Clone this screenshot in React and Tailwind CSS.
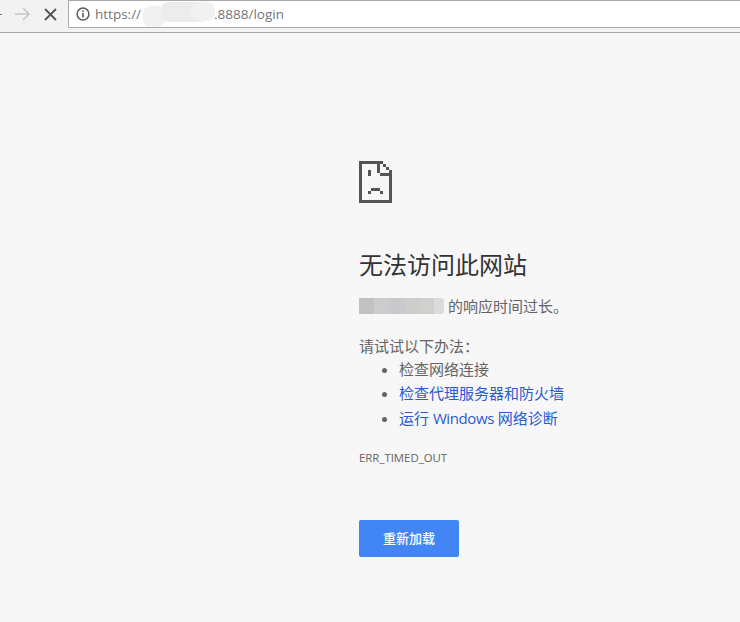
const font = { fontFamily: '"Open Sans", "Noto Sans CJK SC", sans-serif' };

function SadPage() {
  return (
    <svg width="33" height="42" viewBox="0 0 33 42" shapeRendering="crispEdges" className="block">
      <path
        fill="#555555"
        d="M0 0H24V3H3V39H30V15H21V12H18V0H21V12H33V42H0ZM24 3H27V6H24ZM27 6H30V9H27ZM30 9H33V12H30ZM9 9H12V15H9ZM12 27H21V30H12ZM9 30H12V33H9ZM21 30H24V33H21Z"
      />
    </svg>
  );
}

function Blur({ className }) {
  return <span className={className} />;
}

export default function App() {
  return (
    <div className="flex h-[622px] w-[740px] flex-col overflow-hidden bg-[#f7f7f7]" style={font}>
      <header className="flex h-[33px] shrink-0 items-start border-b border-[#a9a9a9] bg-[#f2f2f2]">
        <div className="flex h-[28px] w-[68px] items-center">
          <span className="h-[1px] w-[2px] bg-[#777777]" />
          <svg width="15" height="14" viewBox="0 0 15 14" className="ml-[13px]" fill="none" stroke="#c8c8c8" strokeWidth="1.6">
            <path d="M0 7H14M8 1l6 6-6 6" />
          </svg>
          <svg width="13" height="13" viewBox="0 0 13 13" className="ml-[14px]" fill="none" stroke="#555555" strokeWidth="1.8">
            <path d="M1 1l11 11M12 1L1 12" />
          </svg>
        </div>
        <div className="flex h-[28px] flex-1 items-center rounded-bl-[2px] border-b border-l border-t border-[#a9a9a9] bg-white pl-[7px] text-[13.5px] text-[#767676]">
          <svg width="14" height="14" viewBox="0 0 14 14" fill="none" className="shrink-0">
            <circle cx="7" cy="7" r="5.9" stroke="#5a5a5a" strokeWidth="1.5" />
            <rect x="6.2" y="6" width="1.6" height="4.4" fill="#5a5a5a" />
            <rect x="6.2" y="3.4" width="1.6" height="1.6" fill="#5a5a5a" />
          </svg>
          <span className="ml-[5px]">https://</span>
          <span className="relative h-[25px] w-[73px] shrink-0">
            <Blur className="absolute left-[2px] top-[4px] h-[21px] w-[22px] rounded-[8px] bg-[#f0f0f0]" />
            <Blur className="absolute left-[20px] top-0 h-[20px] w-[48px] rounded-[8px] bg-[#ececec]" />
            <Blur className="absolute left-[50px] top-0 h-[19px] w-[24px] rounded-[8px] bg-[#f1f1f1]" />
          </span>
          <span>.8888/login</span>
        </div>
      </header>

      <main className="flex flex-col pl-[359px] pt-[128px]">
        <SadPage />
        <h1 className="mt-[44px] text-[24px] leading-[36px] font-normal text-[#333333]">无法访问此网站</h1>
        <p className="mt-[11px] flex h-[24px] items-center text-[15px] text-[#646464]">
          <span className="flex h-[16px] w-[85px]">
            <Blur className="h-full w-[15px] bg-[#c2c2c4]" />
            <Blur className="h-full w-[14px] bg-[#ccccca]" />
            <Blur className="h-full w-[17px] bg-[#c8c9cc]" />
            <Blur className="h-full w-[14px] bg-[#cdcdcb]" />
            <Blur className="h-full w-[15px] bg-[#d0d0ce]" />
            <Blur className="h-full w-[10px] rounded-r-[3px] bg-[#dcdcdc]" />
          </span>
          <span className="ml-[4px]">的响应时间过长。</span>
        </p>
        <p className="mt-[16px] h-[23px] text-[15px] leading-[24px] text-[#646464]">请试试以下办法：</p>
        <ul className="list-disc pl-[40px] text-[15px] leading-[24px] text-[#646464]">
          <li>检查网络连接</li>
          <li><a className="text-[#2a5bd0]">检查代理服务器和防火墙</a></li>
          <li className="mt-[1px]"><a className="text-[#2a5bd0]">运行 <span className="tracking-[-0.4px]">Windows</span> 网络诊断</a></li>
        </ul>
        <p className="mt-[20px] text-[11.4px] leading-[16px] text-[#646464]">ERR_TIMED_OUT</p>
        <button className="mt-[54px] h-[37px] w-[100px] rounded-[2px] bg-[#4285f4] text-[13px] font-medium text-white">重新加载</button>
      </main>
    </div>
  );
}
